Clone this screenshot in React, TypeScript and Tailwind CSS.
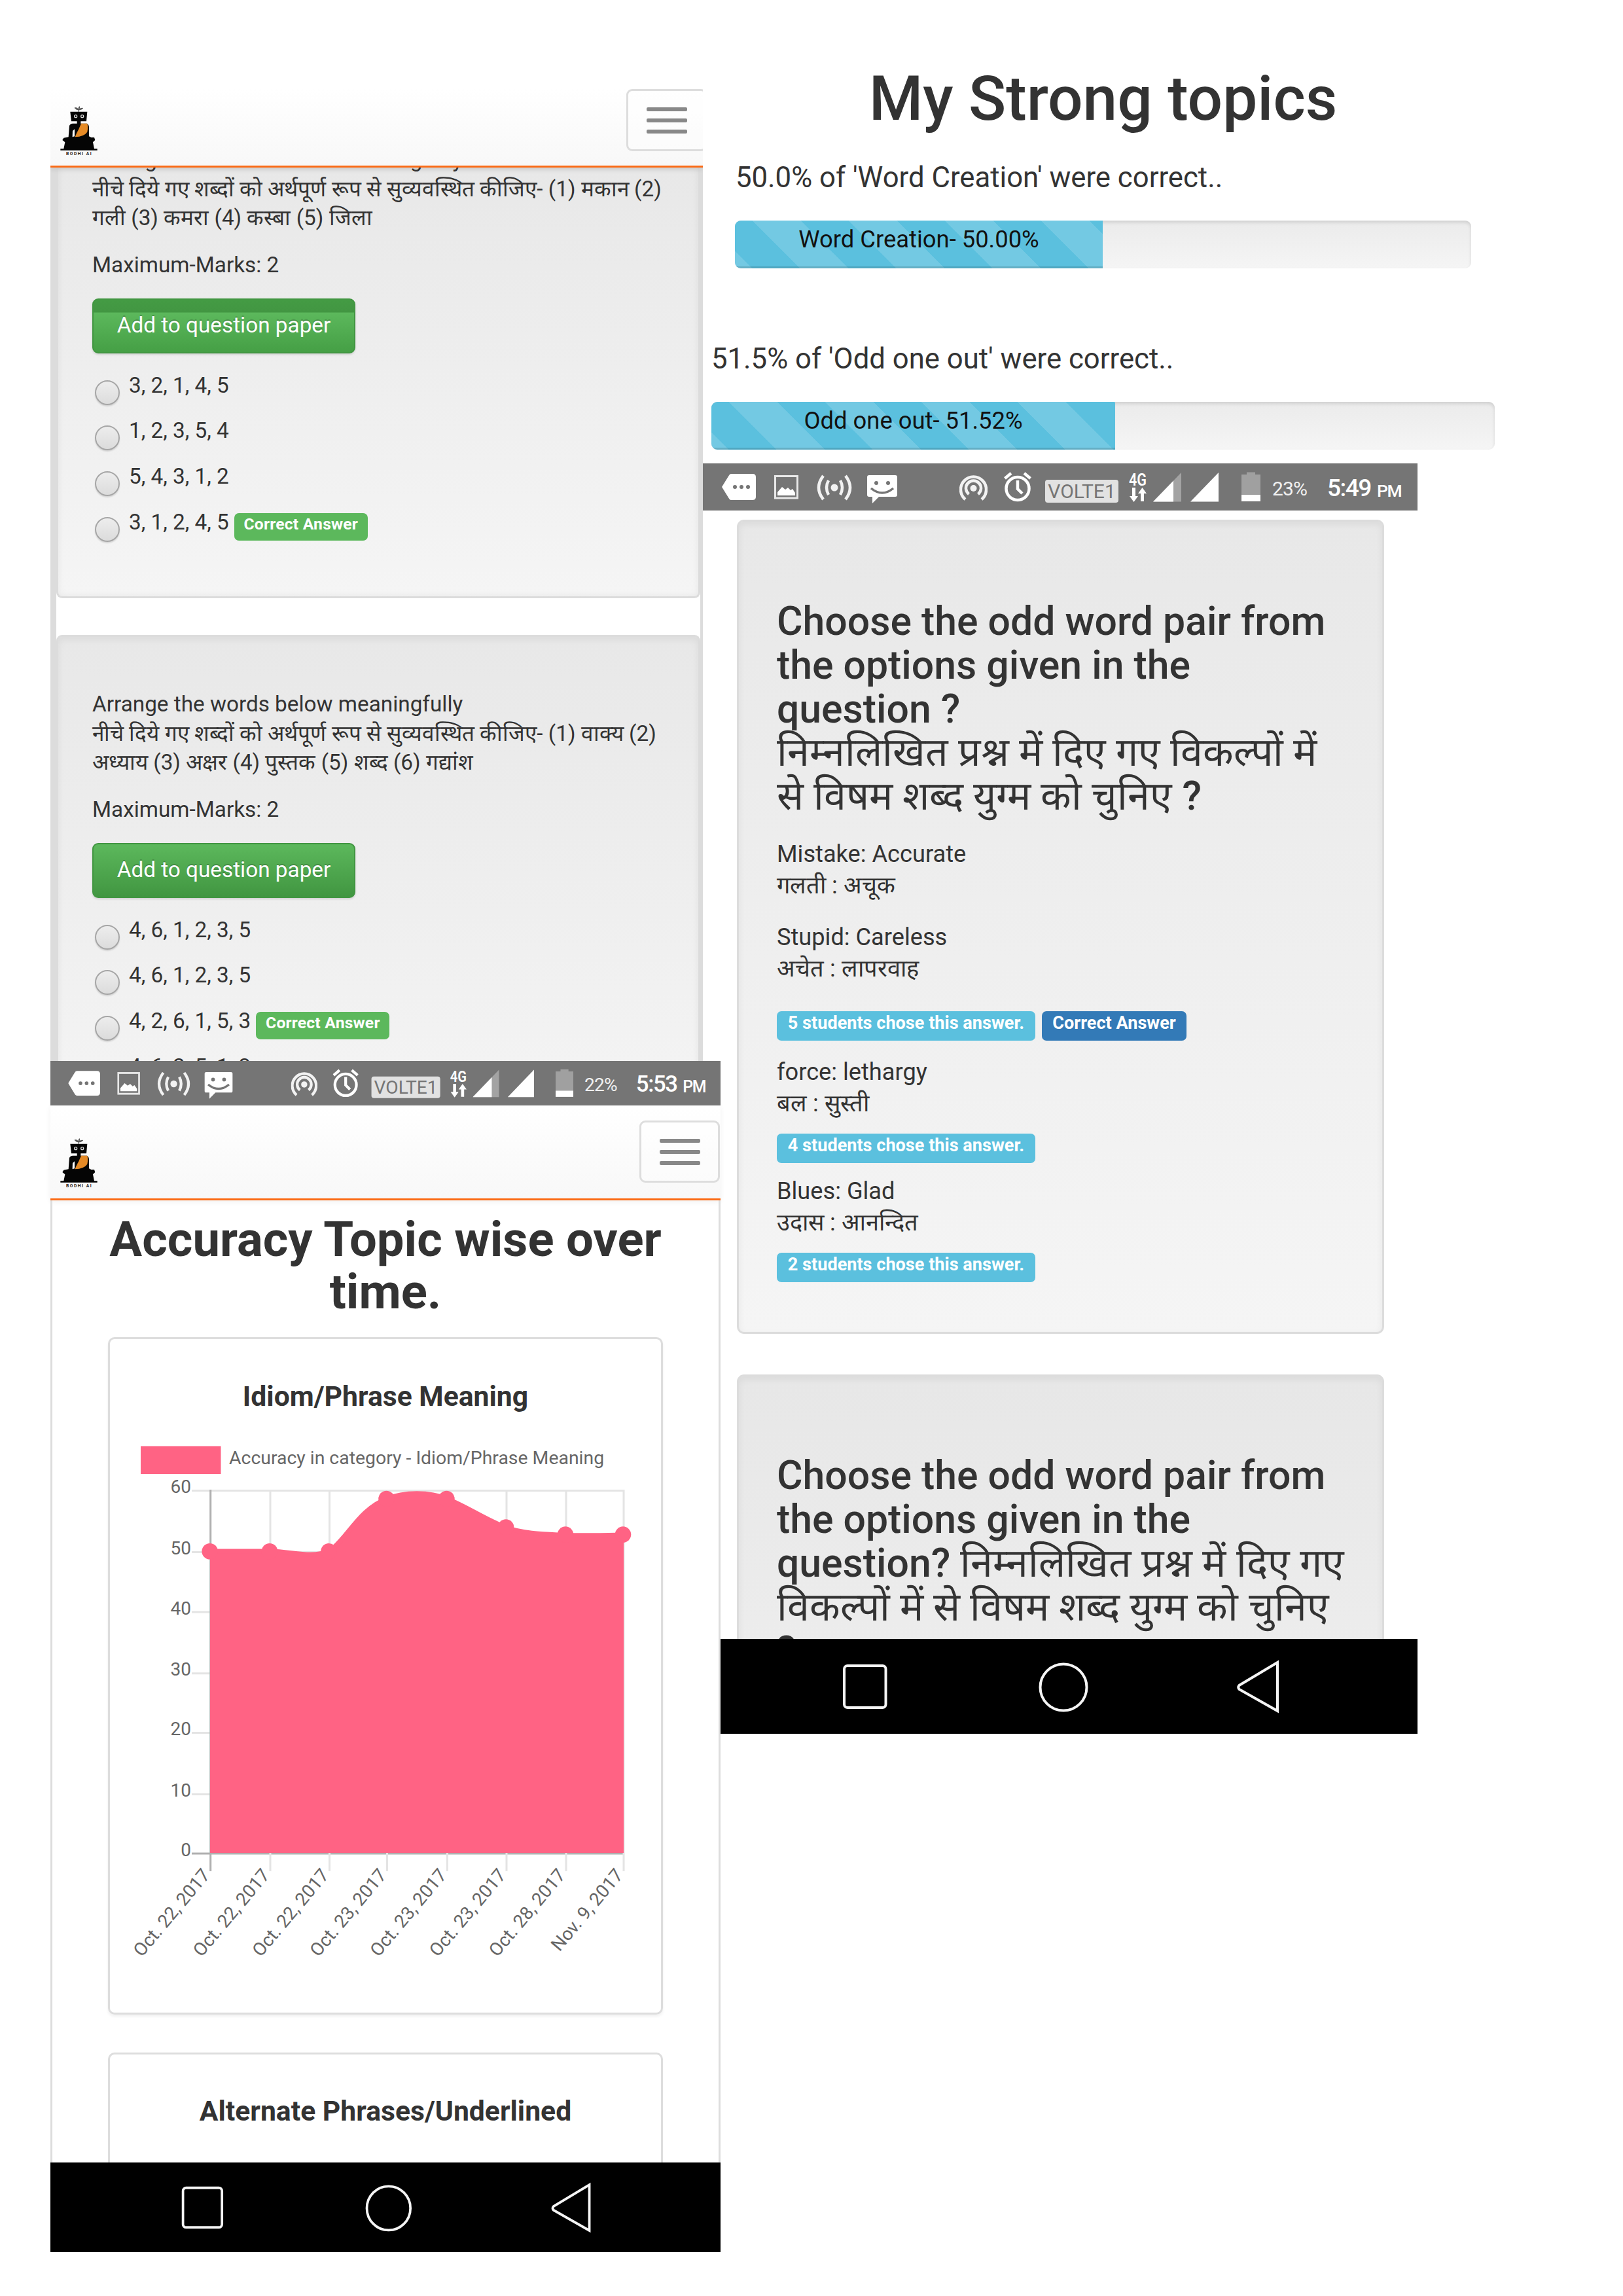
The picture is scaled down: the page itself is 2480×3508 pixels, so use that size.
import type { ReactNode } from "react";

/* ---------- Android system bars ---------- */

function StatusBar({ battery, time }: { battery: string; time: string }) {
  return (
    <div className="flex h-[72.3px] w-[1092px] bg-[#757575] text-white">
      <svg className="ml-[29px] h-[72px] w-[52px] shrink-0" viewBox="0 0 52 72">
        <path d="M14 16H47Q52 16 52 21V51Q52 56 47 56H14Q12 56 10.5 53L0 36L10.5 19Q12 16 14 16Z" fill="#fff" />
        <circle cx="20" cy="36" r="3" fill="#757575" />
        <circle cx="30" cy="36" r="3" fill="#757575" />
        <circle cx="40" cy="36" r="3" fill="#757575" />
      </svg>
      <svg className="ml-[28px] h-[72px] w-[37px] shrink-0" viewBox="0 0 37 72">
        <rect x="1.5" y="19.5" width="34" height="33.5" fill="none" stroke="#e8e8e8" strokeWidth="3" />
        <path d="M5 49V44L12 36L17 40L21 37L25 41L28 39L32 45V49Z" fill="#fff" />
      </svg>
      <svg className="ml-[28px] h-[72px] w-[54px] shrink-0" viewBox="0 0 54 72" fill="none" stroke="#f2f2f2" strokeWidth="4.5">
        <circle cx="27" cy="37" r="5.5" fill="#f2f2f2" stroke="none" />
        <path d="M18 26Q12 37 18 48M10 19Q-4 37 10 55M36 26Q42 37 36 48M44 19Q58 37 44 55" />
      </svg>
      <svg className="ml-[23px] h-[72px] w-[46px] shrink-0" viewBox="0 0 46 72">
        <path d="M3 18H43Q46 18 46 21V48Q46 51 43 51H18L8 61V51H3Q0 51 0 48V21Q0 18 3 18Z" fill="#fff" />
        <circle cx="14" cy="30" r="3" fill="#757575" />
        <circle cx="32" cy="30" r="3" fill="#757575" />
        <path d="M6 38Q23 52 40 38" fill="none" stroke="#757575" strokeWidth="3.5" />
      </svg>
      <svg className="ml-[95px] h-[72px] w-[43px] shrink-0" viewBox="0 0 43 72" fill="none" stroke="#f2f2f2" strokeWidth="4.5">
        <circle cx="21.5" cy="38" r="5" fill="#f2f2f2" stroke="none" />
        <path d="M9 55A19.5 19.5 0 1 1 34 55M14.5 47A11.5 11.5 0 1 1 28.5 47" />
      </svg>
      <svg className="ml-[25px] h-[72px] w-[42px] shrink-0" viewBox="0 0 42 72" fill="none" stroke="#fff" strokeWidth="4.5">
        <circle cx="21" cy="38.500" r="17.500" />
        <path d="M21 26V39L28 46M1.500 23L11 15M40.500 23L31 15" />
      </svg>
      <div className="ml-[21px] mt-[25px] flex h-[35px] w-[112px] shrink-0 items-center justify-center rounded-[4px] bg-[#e2e2e2] text-[30px] leading-none text-[#757575]">
        VOLTE1
      </div>
      <svg className="ml-[16px] h-[72px] w-[28px] shrink-0" viewBox="0 0 28 72" fill="#fff">
        <text x="0" y="34" fontSize="26" fontWeight="600" textLength="27" lengthAdjust="spacingAndGlyphs">4G</text>
        <path d="M5 37H10V50H14L7.500 59L1 50H5ZM18 58H23V46H27L20.500 37L14 46H18Z" />
      </svg>
      <svg className="ml-[9px] h-[72px] w-[43px] shrink-0" viewBox="0 0 43 72">
        <path d="M0 58.500L43 14V58.500Z" fill="#a3a3a3" />
        <path d="M0 58.500L31 26.500V58.500Z" fill="#fff" />
      </svg>
      <svg className="ml-[14px] h-[72px] w-[43px] shrink-0" viewBox="0 0 43 72">
        <path d="M0 58.500L43 14V58.500Z" fill="#fff" />
      </svg>
      <svg className="ml-[35px] h-[72px] w-[29px] shrink-0" viewBox="0 0 29 72">
        <path d="M0 17H8V13.500H21V17H29V48H0Z" fill="#a0a0a0" />
        <rect y="48" width="29" height="10" fill="#fff" />
      </svg>
      <div className="ml-[18px] w-[84px] shrink-0 text-[30px] leading-[77px] tracking-[-0.03em] text-[#f0f0f0]">{battery}</div>
      <div className="w-[76px] shrink-0 text-[37px] font-medium leading-[76px] tracking-[-0.04em]">{time}</div>
      <div className="text-[26.5px] font-medium leading-[83px] tracking-[-0.05em]">PM</div>
    </div>
  );
}

function NavBar() {
  return (
    <div className="h-[145.4px] w-[1092px] bg-black">
      <svg className="block h-[145px] w-[1092px]" viewBox="0 0 1092 145" fill="none" stroke="#f5f5f5" strokeWidth="4">
        <rect x="216" y="41" width="63.500" height="64" rx="5" />
        <circle cx="551" cy="74" r="35.500" />
        <path d="M819.500 71L878 36V110L819.500 77Q817 74 819.500 71Z" />
      </svg>
    </div>
  );
}

/* ---------- Site header ---------- */

function Logo() {
  return (
    <svg className="h-[76px] w-[58px]" viewBox="66 66 174 228">
      <path d="M150 94V82M150 84Q140 84 132 74Q144 72 150 82Q149 74 154 68Q157 76 151 83Q160 73 170 76Q162 85 150 84Z" fill="#555" stroke="#555" strokeWidth="3" />
      <path d="M112 92H190L186 136H160V146H188Q198 150 198 165V205L208 210H222L226 222L216 232L222 262H236V269H67V262H82L88 232L76 222L82 212L104 208L108 156Q112 147 124 146H143V136H117Z" fill="#050505" />
      <path d="M123 180L132 172V205L122 208Z" fill="#fff" />
      <path d="M162 146H190Q195 160 190 185Q176 206 134 208Q140 190 150 174Z" fill="#e58a26" />
      <circle cx="137" cy="113" r="6" fill="none" stroke="#ddd" strokeWidth="4" />
      <circle cx="167" cy="113" r="6" fill="none" stroke="#ddd" strokeWidth="4" />
      <text x="93" y="290" fontSize="20" fontWeight="700" textLength="116" fill="#222">BODHI AI</text>
    </svg>
  );
}

function MenuButton() {
  return (
    <div className="flex h-[95px] w-[123px] shrink-0 flex-col items-center justify-center gap-[11px] rounded-[9px] border-[3px] border-[#dddddd] bg-white/40">
      <div className="h-[6px] w-[62px] rounded-[2px] bg-[#888888]" />
      <div className="h-[6px] w-[62px] rounded-[2px] bg-[#888888]" />
      <div className="h-[6px] w-[62px] rounded-[2px] bg-[#888888]" />
    </div>
  );
}

/* ---------- Question bank screen ---------- */

function Badge({ children, className }: { children: ReactNode; className: string }) {
  return <span className={"shrink-0 whitespace-nowrap rounded-[7px] font-bold text-white " + className}>{children}</span>;
}

function Option({ text, correct }: { text: string; correct?: boolean }) {
  return (
    <div className="flex h-[69.7px] items-start">
      <div className="ml-[4px] mt-[14px] size-[38px] shrink-0 rounded-full border-2 border-[#a6a6a6] bg-gradient-to-b from-[#ededed] to-[#dcdcdc] shadow-[0_2px_2px_rgba(0,0,0,0.12)]" />
      <span className="ml-[14px] whitespace-nowrap">{text}</span>
      {correct && (
        <Badge className="ml-[8px] mt-[8px] h-[42px] w-[204px] bg-[#5cb85c] text-center text-[24.7px] leading-[34px] tracking-[0.008em]">
          Correct Answer
        </Badge>
      )}
    </div>
  );
}

function QuestionBody({ title, lines, options, buttonClass }: { title: string; lines: string[]; options: { text: string; correct?: boolean }[]; buttonClass: string }) {
  return (
    <>
      <div>{title}</div>
      {lines.map((l) => (
        <div key={l} className="whitespace-nowrap">{l}</div>
      ))}
      <div className="mt-[27px]">Maximum-Marks: 2</div>
      <div
        className={
          "mb-[27px] mt-[28px] h-[84px] w-[402px] rounded-[9px] border-2 border-[#419641] text-center leading-[78px] text-white shadow-[0_2px_3px_rgba(0,0,0,0.12)] [text-shadow:0_-2px_0_rgba(0,0,0,0.2)] " +
          buttonClass
        }
      >
        Add to question paper
      </div>
      {options.map((o, i) => (
        <Option key={i} {...o} />
      ))}
    </>
  );
}

function QuestionBankScreen() {
  return (
    <div className="h-[1485px] w-[997px] overflow-hidden bg-white">
      <div className="relative z-10 flex h-[120px] border-b-[3px] border-[#fb6a14] bg-gradient-to-b from-white to-[#f8f8f8] shadow-[0_2px_8px_rgba(0,0,0,0.12)]">
        <div className="ml-[15px] mt-[26px] w-[865px] shrink-0">
          <Logo />
        </div>
        <MenuButton />
      </div>
      <div className="h-[1365px] border-l-[9px] border-r-[4px] border-[#dcdcdc] text-[33.3px] leading-[44.67px] text-[#333333]">
        <div className="h-[658px] overflow-hidden rounded-b-[9px] border-x-[3px] border-b-[3px] border-[#dcdcdc] bg-gradient-to-b from-[#e8e8e8] to-[#f5f5f5] pl-[52px] shadow-[inset_0_0_12px_rgba(0,0,0,0.06)]">
          <div className="-mt-[34px]">
            <QuestionBody
              title="Arrange the words below meaningfully"
              lines={[
                "नीचे दिये गए शब्दों को अर्थपूर्ण रूप से सुव्यवस्थित कीजिए- (1) मकान (2)",
                "गली (3) कमरा (4) कस्बा (5) जिला",
              ]}
              buttonClass="bg-[linear-gradient(to_bottom,#449b44_0,#429642_19px,#5cb85c_20px,#459f45_100%)]"
              options={[{ text: "3, 2, 1, 4, 5" }, { text: "1, 2, 3, 5, 4" }, { text: "5, 4, 3, 1, 2" }, { text: "3, 1, 2, 4, 5", correct: true }]}
            />
          </div>
        </div>
        <div className="mt-[56px] h-[780px] rounded-t-[9px] border-x-[3px] border-t-[3px] border-[#dcdcdc] bg-gradient-to-b from-[#e8e8e8] to-[#f5f5f5] pl-[52px] pt-[81px] shadow-[inset_0_4px_12px_rgba(0,0,0,0.06)]">
          <QuestionBody
            title="Arrange the words below meaningfully"
            lines={[
              "नीचे दिये गए शब्दों को अर्थपूर्ण रूप से सुव्यवस्थित कीजिए- (1) वाक्य (2)",
              "अध्याय (3) अक्षर (4) पुस्तक (5) शब्द (6) गद्यांश",
            ]}
            buttonClass="bg-gradient-to-b from-[#5cb85c] to-[#419641]"
            options={[{ text: "4, 6, 1, 2, 3, 5" }, { text: "4, 6, 1, 2, 3, 5" }, { text: "4, 2, 6, 1, 5, 3", correct: true }, { text: "4, 6, 2, 5, 1, 3" }]}
          />
        </div>
      </div>
    </div>
  );
}

/* ---------- Accuracy chart screen ---------- */

const columns = [
  { x: 154.7, y: 213.2, label: "Oct. 22, 2017" },
  { x: 246, y: 213.2, label: "Oct. 22, 2017" },
  { x: 336.5, y: 213.2, label: "Oct. 22, 2017" },
  { x: 424.5, y: 133, label: "Oct. 23, 2017" },
  { x: 516.4, y: 133, label: "Oct. 23, 2017" },
  { x: 607, y: 176.5, label: "Oct. 23, 2017" },
  { x: 698, y: 187.6, label: "Oct. 28, 2017" },
  { x: 786, y: 187.6, label: "Nov. 9, 2017" },
];
const ticks = [
  { y: 120.6, label: "60" },
  { y: 214.5, label: "50" },
  { y: 306, label: "40" },
  { y: 399.7, label: "30" },
  { y: 490.6, label: "20" },
  { y: 584.4, label: "10" },
  { y: 675, label: "0" },
];
const curve =
  "M154 213C190 213 222 213 246 213C282 214 308 224 336 213C362 196 382 148 424 133C450 122 490 122 516 133C545 144 575 165 607 177C635 187 670 187 698 188.500C730 189 760 189 786 188";

function AccuracyChart() {
  return (
    <svg className="block h-[860px] w-[844px]" viewBox="0 0 844 860">
      <rect x="48" y="52.500" width="122.500" height="42.500" fill="#ff6384" />
      <text x="183" y="80" fontSize="28.400" fill="#666">Accuracy in category - Idiom/Phrase Meaning</text>
      {ticks.map((t) => (
        <g key={t.label}>
          <line x1="126" x2="786" y1={t.y} y2={t.y} stroke={t.label === "0" ? "#b0b0b0" : "#e4e4e4"} strokeWidth="3" />
          <text x="125" y={t.y + 3.500} fontSize="28" fill="#666" textAnchor="end">{t.label}</text>
        </g>
      ))}
      {columns.map((c, i) => (
        <g key={i}>
          <line x1={c.x} x2={c.x} y1="119" y2="702" stroke={i === 0 ? "#b0b0b0" : "#e4e4e4"} strokeWidth="3" />
          <text transform={`translate(${c.x - 7} 702) rotate(-50)`} x="0" y="10" fontSize="28" fill="#666" textAnchor="end">{c.label}</text>
        </g>
      ))}
      <path d={curve + "V674H154Z"} fill="#ff6384" />
      <path d={curve} fill="none" stroke="#ff6384" strokeWidth="7" />
      {columns.map((c, i) => (
        <circle key={i} cx={c.x - 1} cy={c.y} r="12.300" fill="#ff6384" />
      ))}
    </svg>
  );
}

function AccuracyScreen() {
  return (
    <div className="w-[1024px] bg-white">
      <div className="h-[68.400px] overflow-hidden">
        <div className="w-[1092px] origin-top-left scale-x-[0.938] scale-y-[0.946]">
          <StatusBar battery="22%" time="5:53" />
        </div>
      </div>
      <div className="flex h-[145px] border-b-[3px] border-[#fb6a14] bg-gradient-to-b from-white to-[#f8f8f8] shadow-[0_2px_8px_rgba(0,0,0,0.06)]">
        <div className="ml-[15px] mt-[50px] w-[885px]">
          <Logo />
        </div>
        <div className="mt-[23px]">
          <MenuButton />
        </div>
      </div>
      <div className="h-[1470px] overflow-hidden border-x-[3px] border-[#dddddd] text-center text-[#333333]">
        <h2 className="mt-[20px] text-[74.200px] font-bold leading-[79.500px]">
          Accuracy Topic wise over
          <br />
          time.
        </h2>
        <div className="ml-[85px] mt-[30px] h-[1035px] w-[848px] rounded-[10px] border-[3px] border-[#dddddd] pt-[64px] shadow-[0_3px_4px_rgba(0,0,0,0.06)]">
          <h3 className="text-[42.700px] font-bold leading-[46.700px]">Idiom/Phrase Meaning</h3>
          <div className="-mx-px">
            <AccuracyChart />
          </div>
        </div>
        <div className="ml-[85px] mt-[58px] h-[300px] w-[848px] rounded-[10px] border-[3px] border-[#dddddd] pt-[63px]">
          <h3 className="text-[42.700px] font-bold leading-[46.700px]">Alternate Phrases/Underlined</h3>
        </div>
      </div>
      <div className="h-[137px] overflow-hidden">
        <div className="w-[1092px] origin-top-left scale-x-[0.938] scale-y-[0.945]">
          <NavBar />
        </div>
      </div>
    </div>
  );
}

/* ---------- Strong topics ---------- */

function Progress({ label, fillClass }: { label: string; fillClass: string }) {
  return (
    <div className="h-[73px] overflow-hidden rounded-[9px] bg-gradient-to-b from-[#ebebeb] to-[#f5f5f5] shadow-[inset_0_3px_5px_rgba(0,0,0,0.12)]">
      <div
        className={
          "h-full bg-[#5bc0de] bg-[linear-gradient(45deg,rgba(255,255,255,0.15)_25%,transparent_25%,transparent_50%,rgba(255,255,255,0.15)_50%,rgba(255,255,255,0.15)_75%,transparent_75%,transparent)] bg-[length:147px_147px] bg-[position:27px_0] text-center text-[36.400px] leading-[57px] text-[#111111] shadow-[inset_0_-3px_0_rgba(0,0,0,0.13)] " +
          fillClass
        }
      >
        {label}
      </div>
    </div>
  );
}

function StrongTopics() {
  return (
    <div className="ml-[13px] h-[708px] w-[1197px] pt-[99px] text-[#333333]">
      <h1 className="text-center text-[94.500px] font-medium leading-[104px]">My Strong topics</h1>
      <div className="mx-[36px] mt-[38px]">
        <div className="pl-px text-[43.700px] leading-[60px]">50.0% of 'Word Creation' were correct..</div>
        <div className="mt-[36px]">
          <Progress label="Word Creation- 50.00%" fillClass="w-[562px]" />
        </div>
      </div>
      <div className="mt-[108px]">
        <div className="text-[43.700px] leading-[60px]">51.5% of 'Odd one out' were correct..</div>
        <div className="mt-[36px]">
          <Progress label="Odd one out- 51.52%" fillClass="w-[617px]" />
        </div>
      </div>
    </div>
  );
}

/* ---------- Odd-one-out answers screen ---------- */

const chosen = "h-[45px] w-[395px] bg-[#5bc0de] text-center text-[27.100px] leading-[36px]";

function AnswersScreen() {
  return (
    <div className="w-[1092px] bg-white">
      <StatusBar battery="23%" time="5:49" />
      <div className="h-[1723.700px] overflow-hidden pt-[14px] text-[#333333]">
        <div className="ml-[52px] h-[1244px] w-[989px] rounded-[11px] border-[3px] border-[#dcdcdc] bg-gradient-to-b from-[#e8e8e8] to-[#f5f5f5] pl-[58px] pt-[120px] shadow-[inset_0_4px_12px_rgba(0,0,0,0.06)]">
          <div className="whitespace-nowrap text-[60.700px] font-medium leading-[66.700px]">
            Choose the odd word pair from
            <br />
            the options given in the
            <br />
            question ?
            <br />
            निम्नलिखित प्रश्न में दिए गए विकल्पों में
            <br />
            से विषम शब्द युग्म को चुनिए ?
          </div>
          <div className="text-[36.200px] leading-[48.500px]">
            <div className="mt-[30px]">Mistake: Accurate</div>
            <div>गलती : अचूक</div>
            <div className="mt-[30px]">Stupid: Careless</div>
            <div>अचेत : लापरवाह</div>
            <div className="mt-[40px] flex gap-[10px]">
              <Badge className={chosen}>5 students chose this answer.</Badge>
              <Badge className="h-[45px] w-[221px] bg-[#337ab7] text-center text-[27.100px] leading-[36px]">Correct Answer</Badge>
            </div>
            <div className="mt-[24px]">force: lethargy</div>
            <div>बल : सुस्ती</div>
            <div className="mt-[21px] flex">
              <Badge className={chosen}>4 students chose this answer.</Badge>
            </div>
            <div className="mt-[19px]">Blues: Glad</div>
            <div>उदास : आनन्दित</div>
            <div className="mt-[21px] flex">
              <Badge className={chosen}>2 students chose this answer.</Badge>
            </div>
          </div>
        </div>
        <div className="ml-[52px] mt-[62px] h-[600px] w-[989px] rounded-[11px] border-[3px] border-[#dcdcdc] bg-gradient-to-b from-[#e7e7e7] to-[#efefef] pl-[58px] pt-[119px] shadow-[inset_0_4px_12px_rgba(0,0,0,0.06)]">
          <div className="whitespace-nowrap text-[60.700px] font-medium leading-[66.900px]">
            Choose the odd word pair from
            <br />
            the options given in the
            <br />
            question? निम्नलिखित प्रश्न में दिए गए
            <br />
            विकल्पों में से विषम शब्द युग्म को चुनिए
            <br />?
          </div>
        </div>
      </div>
      <NavBar />
    </div>
  );
}

export default function App() {
  return (
    <div className="flex h-[3508px] w-[2480px] items-start overflow-hidden bg-white font-['Roboto',sans-serif]">
      <div className="relative z-10 ml-[77px] mt-[136px] w-[1024px] shrink-0">
        <QuestionBankScreen />
        <AccuracyScreen />
      </div>
      <div className="-ml-[27px] shrink-0">
        <StrongTopics />
        <AnswersScreen />
      </div>
    </div>
  );
}
